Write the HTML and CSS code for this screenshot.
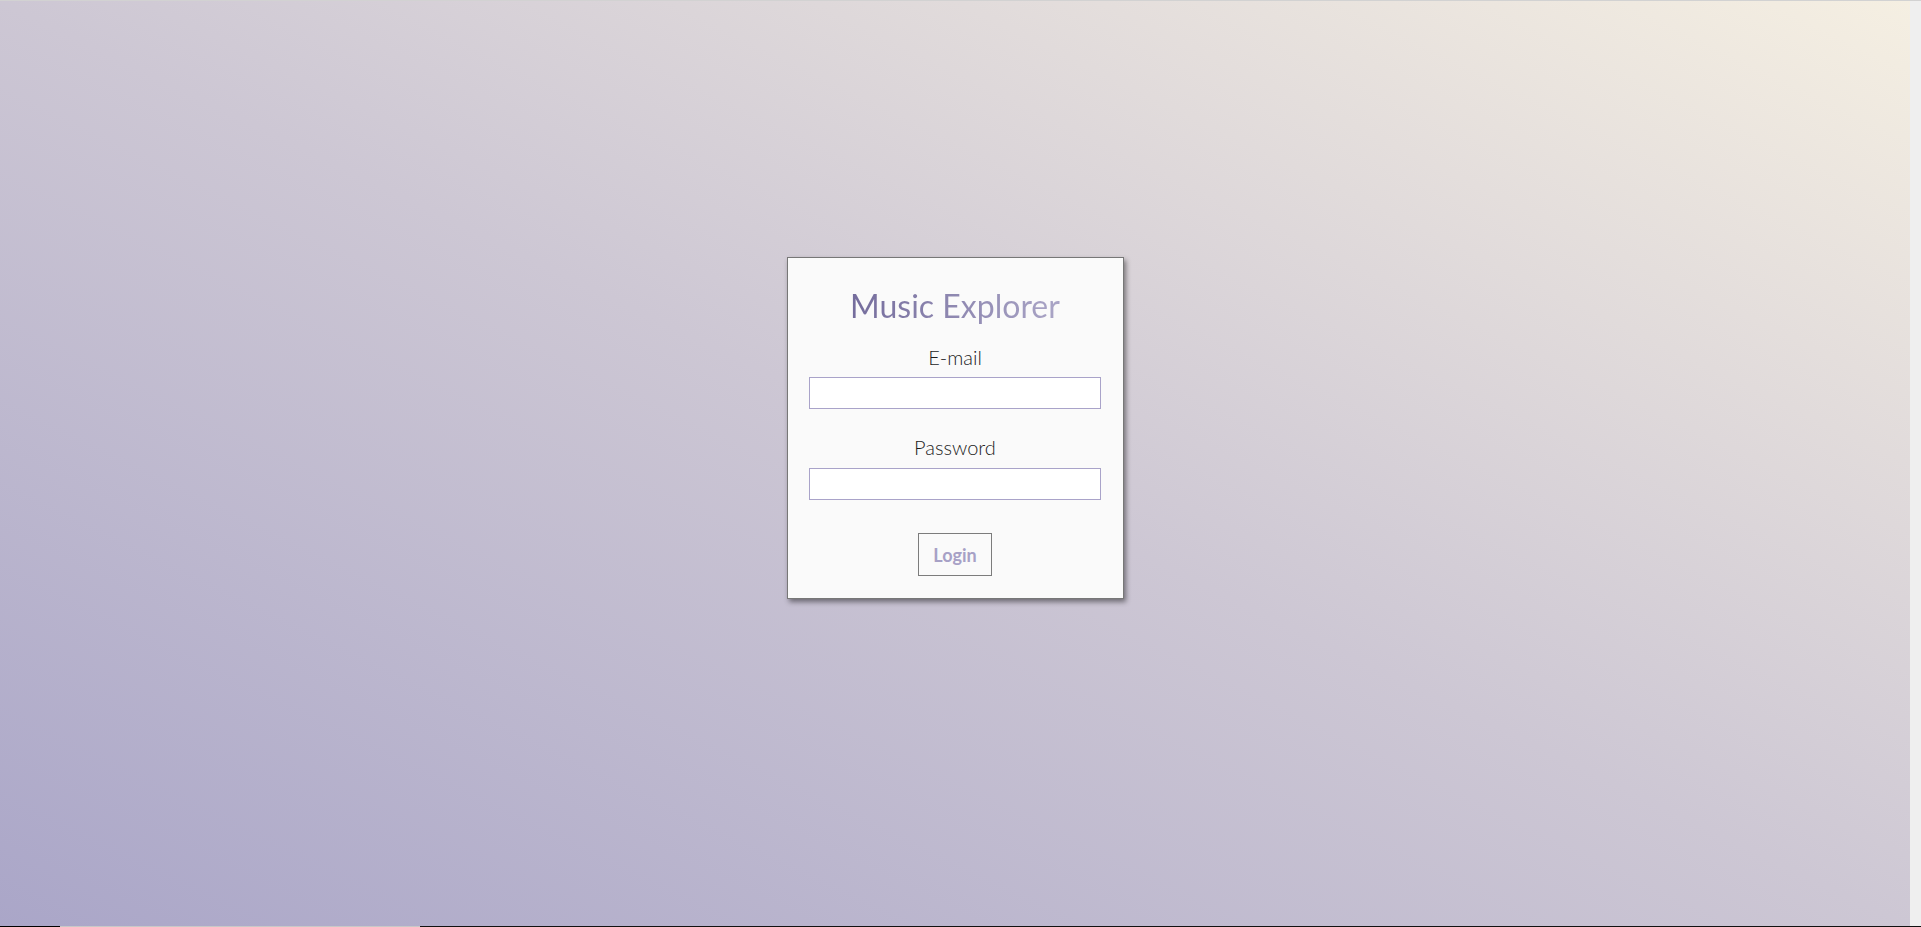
FILE: index.html
```html
<!DOCTYPE html>
<html lang="en">
<head>
<meta charset="utf-8">
<title>Music Explorer</title>
<link rel="stylesheet" href="styles.css">
</head>
<body>
<div class="frame">
  <div class="top-line"></div>
  <div class="middle">
    <main class="stage">
      <form class="card">
        <h1 class="title">Music Explorer</h1>
        <label class="label" for="email">E-mail</label>
        <input class="field" id="email" type="text">
        <label class="label label-pw" for="password">Password</label>
        <input class="field" id="password" type="password">
        <button class="login" type="button">Login</button>
      </form>
    </main>
    <div class="side-strip"></div>
  </div>
  <div class="bottom-line"></div>
</div>
</body>
</html>
```

FILE: styles.css
```css
html, body {
  margin: 0;
  padding: 0;
  height: 100%;
  overflow: hidden;
}

body {
  font-family: "Lato", "Open Sans", sans-serif;
}

.frame {
  display: flex;
  flex-direction: column;
  height: 927px;
  width: 1921px;
}

.top-line {
  height: 1px;
  background: #d2d2d2;
  flex: none;
}

.middle {
  flex: 1;
  display: flex;
  min-height: 0;
}

.stage {
  flex: 1;
  display: flex;
  justify-content: center;
  align-items: flex-start;
  padding-top: 256px;
  background: linear-gradient(to top right, #aaa6c8 0%, #cdc7d4 50%, #f5efe2 100%);
}

.side-strip {
  width: 11px;
  flex: none;
  background: #efefef;
}

.bottom-line {
  height: 1px;
  flex: none;
  background: linear-gradient(to right, #000 0, #000 60px, #c8c8c8 60px, #c8c8c8 420px, #111 420px, #111 100%);
}

.card {
  box-sizing: border-box;
  width: 337px;
  height: 342px;
  margin: 0;
  background: #fafafa;
  border: 1px solid #777;
  box-shadow: 2px 3px 5px rgba(0, 0, 0, 0.45);
  padding: 29px 21px 22px;
  display: flex;
  flex-direction: column;
  align-items: center;
}

.title {
  margin: 0 0 21px;
  font-size: 32px;
  line-height: 38px;
  font-weight: 400;
  background: linear-gradient(to right, #746c9c, #aaa5c6);
  -webkit-background-clip: text;
  background-clip: text;
  color: transparent;
}

.label {
  font-size: 20px;
  line-height: 22px;
  font-weight: 300;
  color: #1c1c1c;
  margin-bottom: 9px;
}

.label-pw {
  margin-bottom: 10px;
}

.field {
  box-sizing: border-box;
  width: 292px;
  height: 32px;
  margin: 0 0 27px;
  border: 1px solid #a9a3c9;
  background: #fff;
  padding: 0 6px;
  font: inherit;
  outline: none;
}

#password {
  margin-bottom: 33px;
}

.login {
  box-sizing: border-box;
  height: 43px;
  padding: 0 14px;
  border: 1px solid #7c7c7c;
  background: #fafafa;
  color: #a7a1c6;
  font-family: inherit;
  font-size: 18px;
  font-weight: 700;
  cursor: pointer;
}
```
